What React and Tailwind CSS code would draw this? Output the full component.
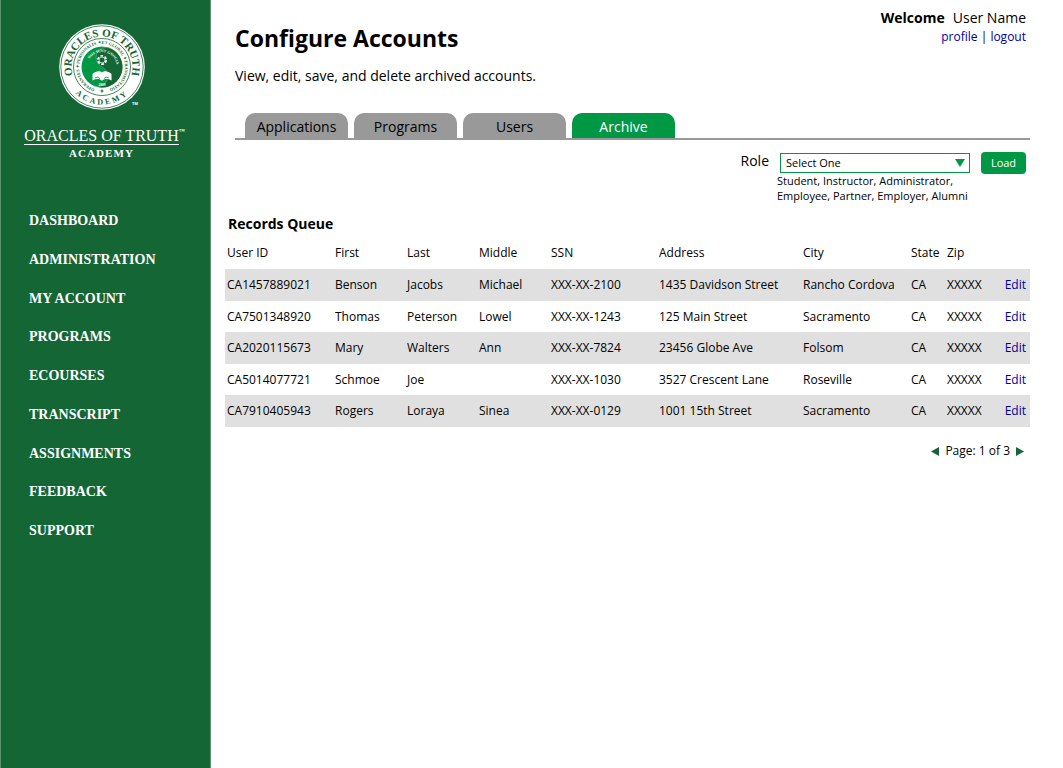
import React from "react";

const NAV = [
  "Dashboard",
  "Administration",
  "My Account",
  "Programs",
  "eCourses",
  "Transcript",
  "Assignments",
  "Feedback",
  "Support",
];

const TABS = ["Applications", "Programs", "Users", "Archive"];

const COLUMNS = [
  ["User ID", "w-[108px]"],
  ["First", "w-[72px]"],
  ["Last", "w-[72px]"],
  ["Middle", "w-[72px]"],
  ["SSN", "w-[108px]"],
  ["Address", "w-[144px]"],
  ["City", "w-[108px]"],
  ["State", "w-[36px]"],
  ["Zip", "w-[50px]"],
];

const ROWS = [
  ["CA1457889021", "Benson", "Jacobs", "Michael", "XXX-XX-2100", "1435 Davidson Street", "Rancho Cordova", "CA", "XXXXX"],
  ["CA7501348920", "Thomas", "Peterson", "Lowel", "XXX-XX-1243", "125 Main Street", "Sacramento", "CA", "XXXXX"],
  ["CA2020115673", "Mary", "Walters", "Ann", "XXX-XX-7824", "23456 Globe Ave", "Folsom", "CA", "XXXXX"],
  ["CA5014077721", "Schmoe", "Joe", "", "XXX-XX-1030", "3527 Crescent Lane", "Roseville", "CA", "XXXXX"],
  ["CA7910405943", "Rogers", "Loraya", "Sinea", "XXX-XX-0129", "1001 15th Street", "Sacramento", "CA", "XXXXX"],
];

function Seal() {
  return (
    <svg viewBox="0 0 88 88" className="size-[88px]" role="img" aria-label="Academy seal">
      <defs>
        <path id="ring-top" d="M 44 74.5 A 30.5 30.5 0 1 1 44.1 74.5" />
        <path id="ring-bottom" d="M 6.5 44 A 37.5 37.5 0 0 0 81.5 44" />
        <path id="motto" d="M 44 67 A 23 23 0 1 1 44.1 67" />
        <path id="inner-motto" d="M 30.5 50 A 14.8 14.8 0 1 1 57.5 50" />
      </defs>
      <circle cx="44" cy="44" r="42.8" fill="#fff" />
      <circle cx="44" cy="44" r="41.2" fill="none" stroke="#156635" strokeWidth="0.8" />
      <circle cx="44" cy="44" r="28.5" fill="none" stroke="#156635" strokeWidth="0.8" />
      <circle cx="44" cy="44" r="20.5" fill="#009845" />
      <g transform="rotate(25 44 44)">
        <path d="M 44 23.5 A 20.5 20.5 0 0 1 44 64.5 A 10.25 10.25 0 0 0 44 44 A 10.25 10.25 0 0 1 44 23.5 Z" fill="#156635" />
        <path d="M 44 64.5 A 10.25 10.25 0 0 0 44 44 A 10.25 10.25 0 0 1 44 23.5" fill="none" stroke="#6fb58c" strokeWidth="0.5" />
      </g>
      <circle cx="44" cy="37" r="4.2" fill="none" stroke="#fff" strokeWidth="1.6" strokeDasharray="2.8 1.6" />
      <circle cx="44" cy="37" r="3" fill="none" stroke="#fff" strokeWidth="0.7" />
      <path d="M 34.5 51 C 38 47.5 42 47.5 44 49.5 C 46 47.5 50 47.5 53.5 51 L 53.5 57.5 C 50 55.5 46 55.5 44 58 C 42 55.5 38 55.5 34.5 57.5 Z" fill="#fff" />
      <path d="M 37 55 L 40 54 L 42 55.5 M 46 55.5 L 48 54 L 51 55" fill="none" stroke="#009845" strokeWidth="0.8" />
      <g fontFamily="'Liberation Serif', serif" fontWeight="700" fill="#156635">
        <text fontSize="11"><textPath href="#ring-top" startOffset="50%" textAnchor="middle">ORACLES OF TRUTH</textPath></text>
        <text fontSize="8" letterSpacing="2.5"><textPath href="#ring-bottom" startOffset="50%" textAnchor="middle">ACADEMY</textPath></text>
        <text fontSize="4.3"><textPath href="#motto" startOffset="50%" textAnchor="middle">OPERANTES ✦ PERSONALIS ✦ ET GLOBAL ✦ TRANSMUTATIO</textPath></text>
        <text fontSize="3.8" fill="#fff"><textPath href="#inner-motto" startOffset="55%" textAnchor="middle">NOS SUNT GNOCIA</textPath></text>
        <text x="44" y="62.5" fontSize="3.5" fill="#fff" textAnchor="middle">2009</text>
        <path d="M 44 65.6 L 44.6 67.4 L 46.4 68 L 44.6 68.6 L 44 70.4 L 43.4 68.6 L 41.6 68 L 43.4 67.4 Z" />
      </g>
      <text x="74" y="82" fontSize="4" fontFamily="'Open Sans', sans-serif" fontWeight="700" fill="#fff">TM</text>
    </svg>
  );
}

function Sidebar() {
  return (
    <aside className="w-[211px] shrink-0 border-x border-[#5b936f] bg-[#156635] font-['Liberation_Serif',serif] text-white">
      <div className="flex flex-col items-center pt-[23px] pr-2">
        <Seal />
        <div className="mt-4 flex items-start">
          <div className="border-b border-white pt-[1px] text-[16px] leading-[16px] whitespace-nowrap">ORACLES OF TRUTH</div>
          <span className="w-0 text-[6px] leading-[8px] font-bold">™</span>
        </div>
        <div className="text-[11px] leading-[16px] font-bold tracking-widest">ACADEMY</div>
      </div>
      <nav className="mt-[50px] flex h-[330px] flex-col items-start justify-between pl-7 text-[14px] leading-[20px] font-bold uppercase">
        {NAV.map((n) => (
          <a key={n} href="#">{n}</a>
        ))}
      </nav>
    </aside>
  );
}

export default function App() {
  return (
    <div className="flex min-h-screen bg-white font-['Open_Sans',sans-serif] text-black">
      <Sidebar />
      <main className="min-w-0 flex-1 pr-[33px] pl-[14px]">
        <header className="flex justify-between pr-1 pl-[10px]">
          <div className="pt-[22px]">
            <h1 className="text-[23px] leading-[32px] font-bold">Configure Accounts</h1>
            <p className="mt-3 text-[14px] leading-[20px]">View, edit, save, and delete archived accounts.</p>
          </div>
          <div className="pt-2 text-right">
            <p className="text-[14px] leading-[20px]">
              <span className="mr-2 font-bold">Welcome</span>User Name
            </p>
            <p className="text-[12px] leading-[18px]">
              <a href="#" className="text-[#00009c]">profile</a> | <a href="#" className="text-[#00009c]">logout</a>
            </p>
          </div>
        </header>

        <div className="mt-[27px] ml-[10px] flex gap-[6px] border-b-2 border-[#999] pl-[10px]" role="tablist">
          {TABS.map((t) => (
            <button
              key={t}
              type="button"
              role="tab"
              aria-selected={t === "Archive"}
              className={
                "h-[25px] w-[103px] rounded-t-[10px] pt-[2px] text-[14px] leading-[23px] " +
                (t === "Archive" ? "bg-[#009845] text-white" : "bg-[#999] text-black")
              }
            >
              {t}
            </button>
          ))}
        </div>

        <form className="mt-3 flex items-start justify-end pr-1">
          <label htmlFor="role" className="text-[14px] leading-[18px]">Role</label>
          <div className="ml-2">
            <div className="relative mt-[1px] ml-[3px] w-[190px]">
              <select
                id="role"
                className="block h-[20px] w-full appearance-none border border-[#009845] bg-white pl-[5px] text-[11px] leading-[18px]"
              >
                <option>Select One</option>
                <option>Student</option>
                <option>Instructor</option>
                <option>Administrator</option>
                <option>Employee</option>
                <option>Partner</option>
                <option>Employer</option>
                <option>Alumni</option>
              </select>
              <svg viewBox="0 0 10 8" className="pointer-events-none absolute top-[6px] right-[5px] h-2 w-[10px]">
                <path d="M0 0H10L5 8Z" fill="#009845" />
              </svg>
            </div>
            <p className="text-[11px] leading-[15px]">
              Student, Instructor, Administrator,
              <br />
              Employee, Partner, Employer, Alumni
            </p>
          </div>
          <button type="button" className="ml-[11px] h-[22px] w-[45px] rounded-[4px] bg-[#009845] text-[11px] text-white">
            Load
          </button>
        </form>

        <h2 className="mt-[11px] pl-[3px] text-[14px] leading-[20px] font-bold">Records Queue</h2>

        <table className="w-full table-fixed border-collapse text-left text-[12px] leading-[18px] whitespace-nowrap">
          <thead>
            <tr className="h-[35px]">
              {COLUMNS.map(([name, width]) => (
                <th key={name} scope="col" className={"pt-[2px] pr-0 pb-0 pl-[2px] font-medium " + width}>{name}</th>
              ))}
              <td className="w-[35px]" />
            </tr>
          </thead>
          <tbody>
            {ROWS.map((row) => (
              <tr key={row[0]} className="h-[31px] odd:h-[32px] odd:bg-[#e0e0e0]">
                {row.map((cell, i) => (
                  <td key={i} className="py-0 pr-0 pl-[2px]">{cell}</td>
                ))}
                <td className="py-0 pr-1 pl-0 text-right">
                  <a href="#" className="text-[#00009c]">Edit</a>
                </td>
              </tr>
            ))}
          </tbody>
        </table>

        <div className="mt-[15px] flex items-center justify-end gap-[6px] pr-[6px] text-[12px] leading-[18px]">
          <button type="button" aria-label="Previous page">
            <svg viewBox="0 0 8 9" className="h-[9px] w-2"><path d="M8 0V9L0 4.5Z" fill="#156635" /></svg>
          </button>
          <span>Page: 1 of 3</span>
          <button type="button" aria-label="Next page">
            <svg viewBox="0 0 8 9" className="h-[9px] w-2"><path d="M0 0V9L8 4.5Z" fill="#156635" /></svg>
          </button>
        </div>
      </main>
    </div>
  );
}
